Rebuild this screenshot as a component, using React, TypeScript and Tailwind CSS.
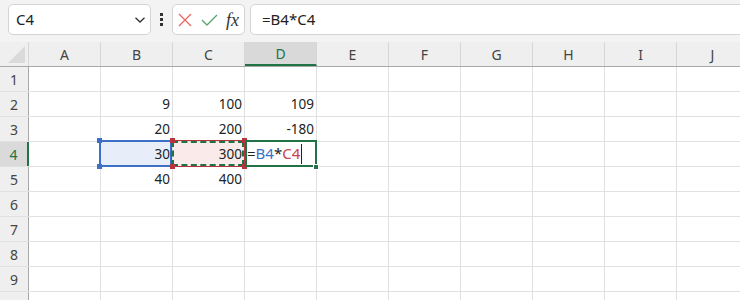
import React from "react";

const COLS = ["A", "B", "C", "D", "E", "F", "G", "H", "I", "J"];
const DATA: Record<string, string> = {
  B2: "9", C2: "100", D2: "109",
  B3: "20", C3: "200", D3: "-180",
  B4: "30", C4: "300",
  B5: "40", C5: "400",
};

function Chevron() {
  return (
    <svg width="12" height="8" viewBox="0 0 12 8" className="block">
      <path d="M1.5 1.8 L6 6 L10.5 1.8" fill="none" stroke="#333" strokeWidth="1.3" />
    </svg>
  );
}

export default function App() {
  return (
    <div className="relative w-[740px] h-[300px] overflow-hidden bg-white font-['Noto_Sans',sans-serif] text-[#222]">
      {/* Formula bar */}
      <div className="flex h-[42px] items-start overflow-hidden bg-[#f3f3f3] pt-[4px] pl-[8px]">
        <div className="flex h-[31px] w-[143px] shrink-0 items-center justify-between rounded-[5px] border border-[#d4d4d4] bg-white pl-[7px] pr-[4px]">
          <span className="text-[15px] leading-none text-[#222]">C4</span>
          <Chevron />
        </div>
        <div className="flex h-[31px] w-[21px] shrink-0 flex-col items-center justify-center gap-[2.5px]">
          <span className="block h-[2.5px] w-[2.5px] bg-[#333]" />
          <span className="block h-[2.5px] w-[2.5px] bg-[#333]" />
          <span className="block h-[2.5px] w-[2.5px] bg-[#333]" />
        </div>
        <div className="flex h-[31px] w-[73px] shrink-0 items-center rounded-[5px] border border-[#d4d4d4] bg-white pl-[5px]">
          <svg width="14" height="14" viewBox="0 0 14 14" className="block">
            <path d="M1 1 L13 13 M13 1 L1 13" stroke="#e86a6a" strokeWidth="1.4" fill="none" />
          </svg>
          <svg width="17" height="12" viewBox="0 0 17 12" className="ml-[9px] block">
            <path d="M1 6 L6 11 L16 1" stroke="#5aa86b" strokeWidth="1.4" fill="none" />
          </svg>
          <span className="ml-[8px] font-['Liberation_Serif',serif] text-[18px] italic leading-none text-[#333]">
            fx
          </span>
        </div>
        <div className="ml-[5px] flex h-[31px] w-[520px] shrink-0 items-center rounded-l-[5px] border border-[#d4d4d4] bg-white pl-[11px]">
          <span className="text-[15px] leading-none text-[#222]">=B4*C4</span>
        </div>
      </div>

      {/* Column headers */}
      <div className="flex h-[25px] border-b border-[#a8a8a8] bg-[#efefef]">
        <div className="relative w-[29px] shrink-0 border-r border-[#d6d6d6]">
          <svg width="18" height="17" viewBox="0 0 18 17" className="absolute left-[8px] top-[4px]">
            <path d="M17 0 L17 17 L0 17 Z" fill="#dadada" />
          </svg>
        </div>
        {COLS.map((c) => (
          <div
            key={c}
            className={
              c === "D"
                ? "flex w-[72px] shrink-0 items-center justify-center border-r border-[#d6d6d6] border-b-2 border-b-[#217346] bg-[#d9d9d9] text-[14px] text-[#217346]"
                : "flex w-[72px] shrink-0 items-center justify-center border-r border-[#d6d6d6] text-[14px] text-[#444]"
            }
          >
            {c}
          </div>
        ))}
      </div>

      {/* Rows */}
      {Array.from({ length: 10 }, (_, i) => i + 1).map((r) => (
        <div key={r} className="flex h-[25px] border-b border-[#e1e1e1]">
          <div
            className={
              r === 4
                ? "flex w-[29px] shrink-0 items-center justify-center border-r-2 border-[#217346] bg-[#dadada] text-[14px] text-[#217346]"
                : "flex w-[29px] shrink-0 items-center justify-center border-r border-[#a8a8a8] bg-[#efefef] text-[14px] text-[#444]"
            }
          >
            {r}
          </div>
          {COLS.map((c) => {
            const key = `${c}${r}`;
            const bg = key === "B4" ? "bg-[#e8eef9]" : key === "C4" ? "bg-[#fbeaea]" : "bg-white";
            return (
              <div
                key={key}
                className={`flex w-[72px] shrink-0 items-center justify-end border-r border-[#e1e1e1] pr-[2px] text-[13.5px] ${bg}`}
              >
                {DATA[key] ?? ""}
              </div>
            );
          })}
        </div>
      ))}

      {/* Reference highlight: B4 (blue) */}
      <div className="absolute left-[99px] top-[140px] h-[27px] w-[73px] border-2 border-[#3c6fc8]" />
      <div className="absolute left-[97px] top-[138px] h-[5px] w-[5px] bg-[#3c6fc8]" />
      <div className="absolute left-[97px] top-[164px] h-[5px] w-[5px] bg-[#3c6fc8]" />

      {/* Reference highlight: C4 (red, marching) */}
      <div className="absolute left-[171px] top-[140px] h-[27px] w-[74px] border border-[#b8343c]" />
      <div className="absolute left-[172px] top-[141px] h-[25px] w-[72px] border-2 border-dashed border-[#217346]" />
      <div className="absolute left-[170px] top-[138px] h-[5px] w-[5px] bg-[#b8343c]" />
      <div className="absolute left-[170px] top-[164px] h-[5px] w-[5px] bg-[#b8343c]" />
      <div className="absolute left-[242px] top-[138px] h-[5px] w-[5px] bg-[#b8343c]" />
      <div className="absolute left-[242px] top-[164px] h-[5px] w-[5px] bg-[#b8343c]" />

      {/* Active cell D4 */}
      <div className="absolute left-[245px] top-[140px] h-[27px] w-[72px] border-2 border-[#217346]" />
      <div className="absolute left-[313px] top-[164px] h-[6px] w-[6px] border border-white bg-[#217346]" />
      <div className="absolute left-[247px] top-[142px] flex h-[23px] items-center text-[15px] leading-none">
        <span className="text-[#222]">=</span>
        <span className="text-[#3c6fc8]">B4</span>
        <span className="text-[#222]">*</span>
        <span className="text-[#c8414b]">C4</span>
      </div>
      <div className="absolute left-[301px] top-[144px] h-[20px] w-[1px] bg-[#222]" />
    </div>
  );
}
